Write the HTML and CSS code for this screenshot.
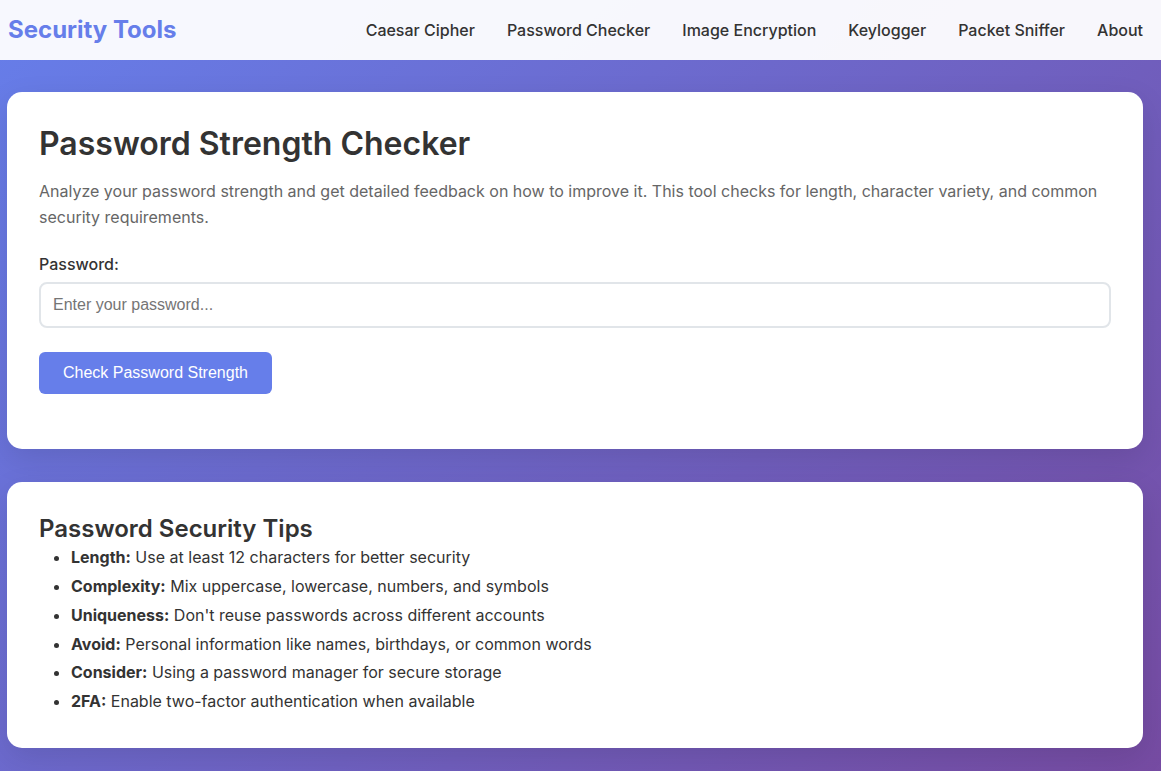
FILE: index.html
```html
<!DOCTYPE html>
<html lang="en">
<head>
<meta charset="utf-8">
<title>Password Strength Checker - Security Tools</title>
<link rel="stylesheet" href="styles.css">
</head>
<body>
<header class="topbar">
  <div class="logo">Security Tools</div>
  <nav class="nav">
    <a href="#">Caesar Cipher</a>
    <a href="#">Password Checker</a>
    <a href="#">Image Encryption</a>
    <a href="#">Keylogger</a>
    <a href="#">Packet Sniffer</a>
    <a href="#">About</a>
  </nav>
</header>
<main class="main">
  <section class="card checker">
    <h1 class="title">Password Strength Checker</h1>
    <p class="desc">Analyze your password strength and get detailed feedback on how to improve it. This tool checks for length, character variety, and common security requirements.</p>
    <div class="form-group">
      <label class="label" for="pw">Password:</label>
      <input class="input" id="pw" type="text" placeholder="Enter your password...">
    </div>
    <button class="btn" type="button">Check Password Strength</button>
  </section>
  <section class="card tips">
    <h3 class="tips-title">Password Security Tips</h3>
    <ul class="tips-list">
      <li><strong>Length:</strong> Use at least 12 characters for better security</li>
      <li><strong>Complexity:</strong> Mix uppercase, lowercase, numbers, and symbols</li>
      <li><strong>Uniqueness:</strong> Don't reuse passwords across different accounts</li>
      <li><strong>Avoid:</strong> Personal information like names, birthdays, or common words</li>
      <li><strong>Consider:</strong> Using a password manager for secure storage</li>
      <li><strong>2FA:</strong> Enable two-factor authentication when available</li>
    </ul>
  </section>
</main>
</body>
</html>
```

FILE: styles.css
```css
* { box-sizing: border-box; }
html, body { margin: 0; padding: 0; }
body {
  font-family: Inter, "Noto Sans", sans-serif;
  color: #333;
  line-height: 1.6;
  min-height: 100vh;
  background: linear-gradient(135deg, #667eea 0%, #764ba2 100%);
}
.topbar {
  height: 60px;
  display: flex;
  align-items: center;
  justify-content: space-between;
  padding: 0 18px 0 8px;
  background: rgba(255, 255, 255, 0.95);
}
.logo {
  font-size: 24px;
  font-weight: 700;
  color: #667eea;
  line-height: 1;
}
.nav {
  display: flex;
  gap: 32px;
  padding-top: 2px;
}
.nav a {
  color: #333;
  text-decoration: none;
  font-size: 16px;
  font-weight: 500;
}
.main {
  display: flex;
  flex-direction: column;
  gap: 33px;
  padding: 32px 18px 30px 7px;
}
.card {
  background: #fff;
  border-radius: 15px;
  padding: 32px;
  box-shadow: 0 10px 30px rgba(0, 0, 0, 0.1);
}
.checker { padding-bottom: 55px; }
.title {
  margin: 1px 0 0;
  font-size: 32px;
  font-weight: 600;
  line-height: 1.2;
  color: #333;
}
.desc {
  margin: 15px 0 24px;
  color: #666;
  font-size: 16px;
  line-height: 26px;
}
.form-group {
  display: flex;
  flex-direction: column;
  gap: 8px;
  margin-bottom: 24px;
}
.label {
  font-weight: 500;
  font-size: 16px;
  line-height: 20px;
  color: #333;
}
.input {
  height: 46px;
  width: 100%;
  border: 2px solid #e1e5e9;
  border-radius: 8px;
  padding: 0 12px;
  font-family: "Liberation Sans", Arial, sans-serif;
  font-size: 16px;
  color: #333;
  background: #fff;
}
.input::placeholder { color: #757575; }
.btn {
  align-self: flex-start;
  height: 42px;
  padding: 0 24px;
  border: none;
  border-radius: 6px;
  background: #667eea;
  color: #fff;
  font-family: "Liberation Sans", Arial, sans-serif;
  font-size: 16px;
}
.tips-title {
  margin: 0;
  font-size: 24px;
  font-weight: 600;
  line-height: 29px;
}
.tips-list {
  margin: 0;
  padding-left: 32px;
  font-size: 16px;
  line-height: 28.7px;
}
.tips-list strong { font-weight: 700; }
```
